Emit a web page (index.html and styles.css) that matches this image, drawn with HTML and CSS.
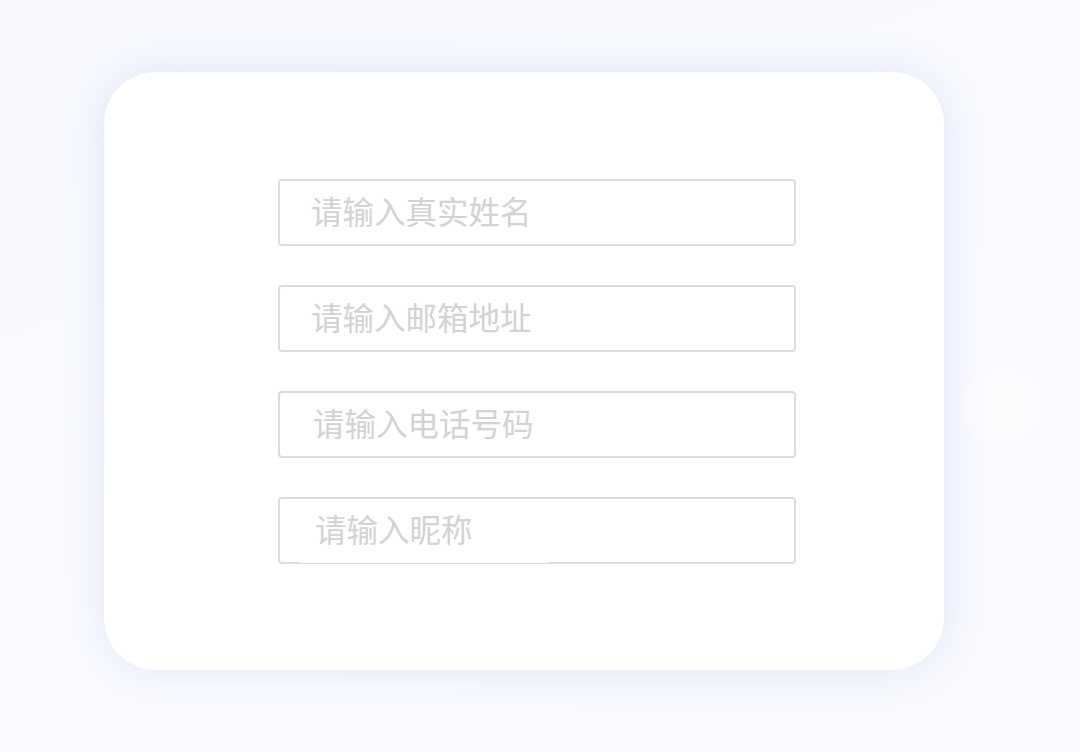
FILE: index.html
```html
<!DOCTYPE html>
<html lang="zh-CN">
<head>
  <meta charset="UTF-8" />
  <meta name="viewport" content="width=device-width, initial-scale=1.0"/>
  <title>注册信息</title>
  <link rel="stylesheet" href="styles.css">
</head>
<body>

  <div class="glow"></div>

  <div class="card">
    <form class="form">
      <input class="field" type="text" placeholder="请输入真实姓名">
      <input class="field" type="email" placeholder="请输入邮箱地址">
      <input class="field tel" type="tel" placeholder="请输入电话号码">
      <div class="nick-wrap">
        <input class="field nick" type="text" placeholder="请输入昵称">
      </div>
    </form>
  </div>

</body>
</html>
```

FILE: styles.css
```css
html, body {
  height: 100%;
}
body {
  font-family: "Noto Sans CJK SC", "Noto Sans", sans-serif;
  background: linear-gradient(160deg, #f6f8fd 0%, #f9fafe 60%, #f8f9fd 100%);
  margin: 0;
  padding: 72px 0 0 104px;
  box-sizing: border-box;
  overflow: hidden;
  position: relative;
}
.glow {
  position: absolute;
  left: 965px;
  top: 365px;
  width: 80px;
  height: 80px;
  border-radius: 50%;
  background: #fbfbfe;
  filter: blur(6px);
}
.card {
  position: relative;
  width: 840px;
  height: 598px;
  background: #fff;
  border-radius: 52px;
  box-shadow: 0 0 40px rgba(110, 130, 240, 0.16);
  box-sizing: border-box;
  padding: 107px 0 0 174px;
}
.form {
  display: flex;
  flex-direction: column;
  gap: 39px;
  width: 518px;
}
.field {
  display: block;
  width: 518px;
  height: 67px;
  box-sizing: border-box;
  border: 2px solid #dcdcdc;
  border-radius: 4px;
  padding: 0 0 5px 31px;
  font-family: inherit;
  font-size: 31.5px;
  color: #333;
  background: #fff;
  outline: none;
}
.field::placeholder {
  color: #d2d2d2;
}
.tel {
  padding-left: 33px;
}
.nick-wrap {
  position: relative;
}
.nick {
  padding-left: 35px;
}
.nick-wrap::after {
  content: "";
  position: absolute;
  left: 22px;
  width: 248px;
  bottom: 1px;
  height: 1px;
  background: #fff;
}
```
